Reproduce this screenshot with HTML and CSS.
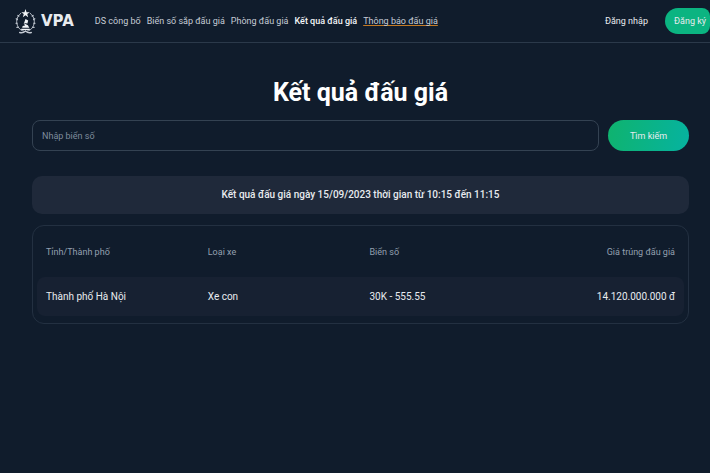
FILE: index.html
```html
<!DOCTYPE html>
<html lang="vi">
<head>
<meta charset="utf-8">
<meta name="viewport" content="width=device-width, initial-scale=1">
<title>VPA - Kết quả đấu giá</title>
<link rel="stylesheet" href="styles.css">
</head>
<body>
<header class="topbar">
  <a class="brand" href="#">
    <svg class="brand-mark" viewBox="0 0 22 26" aria-hidden="true">
      <g fill="none" stroke="#c3cad3" stroke-linecap="round">
        <path d="M6 4.500C1.500 8 .4 14 3.500 19c1.500 2.500 3.500 3.500 5.500 4" stroke-width="1"/>
        <path d="M16 4.500c4.500 3.500 5.600 9.500 2.500 14.500-1.500 2.500-3.500 3.500-5.500 4" stroke-width="1"/>
        <path d="M4 7.500L3 6.500M2.500 11l-1.300-.8M2.200 15l-1.200-.2M3.500 19l-1.500.2M18 7.500L19 6.500M19.500 11l1.300-.8M19.800 15l1.200-.2M18.500 19l1.500.2" stroke-width="1.200"/>
        <path d="M5 24.500c2.500.8 4.500-.2 6-1.500 1.500 1.300 3.500 2.300 6 1.500" stroke-width="1.600"/>
      </g>
      <g fill="#f1f4f7">
        <path d="M11 0l1.100 3.200h3.400l-2.700 2 1 3.300-2.800-2-2.800 2 1-3.300-2.700-2h3.400z"/>
        <path d="M11 10.500l2.800 1.500-.8 3-3.500-.5zM9 14.500l4.500 2.500 1.500 2.500H7.500l.5-1.700 2.500-.6zM6.500 20.500h9V22h-9z"/>
      </g>
    </svg>
    <span>VPA</span>
  </a>
  <nav class="links">
    <a href="#">DS công bố</a>
    <a href="#">Biển số sắp đấu giá</a>
    <a href="#">Phòng đấu giá</a>
    <a class="current" href="#">Kết quả đấu giá</a>
    <a class="notice" href="#">Thông báo đấu giá</a>
  </nav>
  <div class="account">
    <a href="#">Đăng nhập</a>
    <button class="register" type="button">Đăng ký</button>
  </div>
</header>
<main class="content">
  <h1>Kết quả đấu giá</h1>
  <form class="search">
    <input type="text" aria-label="Nhập biển số" placeholder="Nhập biển số">
    <button type="button">Tìm kiếm</button>
  </form>
  <p class="session">Kết quả đấu giá ngày 15/09/2023 thời gian từ 10:15 đến 11:15</p>
  <div class="results">
    <table>
      <thead>
        <tr><th>Tỉnh/Thành phố</th><th>Loại xe</th><th>Biển số</th><th>Giá trúng đấu giá</th></tr>
      </thead>
      <tbody>
        <tr><td>Thành phố Hà Nội</td><td>Xe con</td><td>30K - 555.55</td><td>14.120.000.000 đ</td></tr>
      </tbody>
    </table>
  </div>
</main>
</body>
</html>
```
FILE: styles.css
```css
* { box-sizing: border-box; }
body {
  margin: 0;
  min-height: 100vh;
  background: #101c2c;
  color: #e8ebef;
  font-family: Roboto, "Liberation Sans", sans-serif;
  font-size: 9px;
  line-height: 12px;
  overflow-x: hidden;
}
a { color: inherit; text-decoration: none; }
button, input { font: inherit; color: inherit; }
.topbar {
  display: flex;
  align-items: center;
  height: 43px;
  padding-left: 15px;
  border-bottom: 1px solid #2b394a;
  white-space: nowrap;
}
.brand {
  display: flex;
  align-items: center;
  gap: 5px;
  font-family: "DejaVu Sans", sans-serif;
  font-size: 15px;
  font-weight: 700;
  line-height: 20px;
}
.brand-mark { width: 21px; height: 25px; }
.links { display: flex; gap: 6px; margin-left: 21px; color: #c6cdd6; }
.links .current { color: #f4f6f8; font-weight: 500; }
.links .notice {
  text-decoration: underline;
  text-decoration-color: #c47a24;
  text-decoration-thickness: 1px;
  text-decoration-skip-ink: none;
}
.account { display: flex; align-items: center; gap: 17px; margin-left: auto; }
.register {
  height: 26px;
  padding: 0 4px 0 9px;
  border: 0;
  border-radius: 13px 8px 8px 13px;
  background: #0bb481;
}
.content { padding: 32px 21px 0 32px; }
h1 {
  margin: 0;
  font-size: 25px;
  font-weight: 700;
  line-height: 36px;
  text-align: center;
  color: #fff;
}
.search { display: flex; gap: 9px; margin-top: 9px; }
.search input {
  flex: 1;
  min-width: 0;
  height: 31px;
  padding: 0 9px;
  border: 1px solid #344252;
  border-radius: 8px;
  background: transparent;
}
.search input::placeholder { color: #7f8c9c; opacity: 1; }
.search button {
  width: 81px;
  height: 31px;
  border: 0;
  border-radius: 16px;
  background: linear-gradient(100deg, #0fb36e, #06b3a0);
}
.session {
  margin: 25px 0 11px;
  padding: 13px;
  border-radius: 10px;
  background: #1f293a;
  font-size: 10px;
  font-weight: 500;
  text-align: center;
}
.results {
  padding: 4px 4px 7px;
  border: 1px solid #233041;
  border-radius: 12px;
}
table { width: 100%; border-collapse: collapse; table-layout: fixed; }
th, td { padding: 0 9px; text-align: left; white-space: nowrap; }
th { height: 47px; padding-bottom: 4px; font-weight: 400; color: #94a0b0; }
td { height: 39px; background: #172132; font-size: 10px; }
th:last-child, td:last-child { text-align: right; }
td:first-child { border-radius: 8px 0 0 8px; }
td:last-child { border-radius: 0 8px 8px 0; }
```
